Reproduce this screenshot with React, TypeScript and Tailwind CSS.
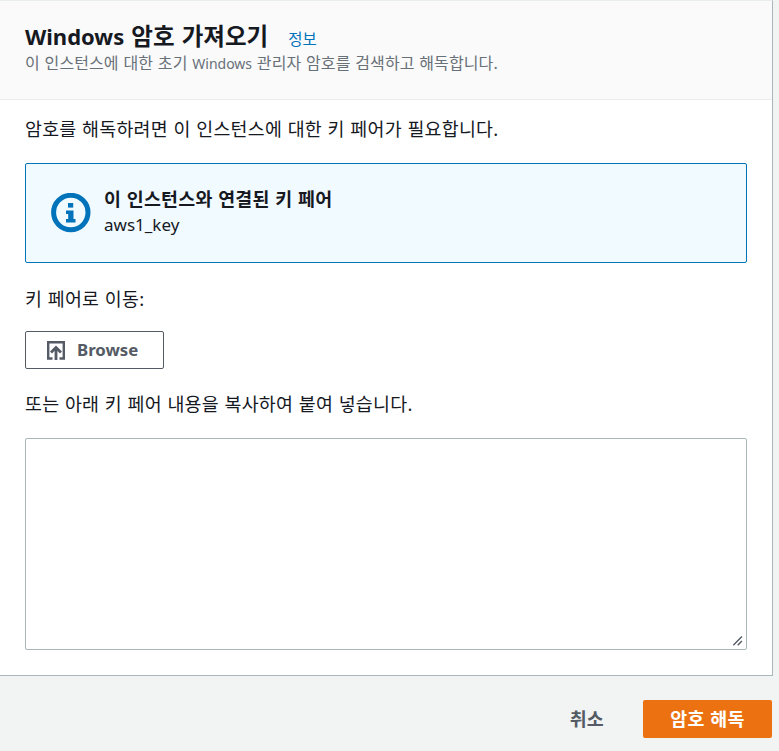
const ko = "text-[18.4px] leading-[24px] tracking-[0.26px] [word-spacing:0.5px]";

export default function App() {
  return (
    <div className="h-[751px] w-[779px] overflow-hidden bg-[#f2f3f3] font-['Noto_Sans','Noto_Sans_CJK_KR',sans-serif] text-[#16191f]">
      <div className="h-[676px] w-[773px] border-r border-b border-t border-[#aab7b8] border-t-[#eaeded] bg-white">
        <div className="h-[99px] border-b border-[#eaeded] bg-[#fafafa] pl-[25px] pt-[19px]">
          <div className="flex items-baseline">
            <h1 className="text-[23.5px] leading-[32px] font-bold [word-spacing:1px]">
              <span className="text-[22px]">Windows</span> 암호 가져오기
            </h1>
            <a className="ml-5 text-[15.5px] leading-5 text-[#0073bb]">정보</a>
          </div>
          <p className="mt-[1px] text-[16px] leading-[20px] tracking-[0.1px] [word-spacing:0.5px] text-[#687078]">
            이 인스턴스에 대한 초기 <span className="text-[14px] tracking-normal">Windows</span> 관리자 암호를 검색하고 해독합니다.
          </p>
        </div>
        <div className="px-[25px] pt-[17px]">
          <p className={ko}>암호를 해독하려면 이 인스턴스에 대한 키 페어가 필요합니다.</p>
          <div className="mt-[22px] flex h-[100px] w-[722px] items-center rounded-[2px] border border-[#0073bb] bg-[#f1faff] pl-[25px]">
            <svg width="40" height="40" viewBox="0 0 40 40" className="shrink-0">
              <circle cx="19.8" cy="19.5" r="17.2" fill="none" stroke="#0073bb" strokeWidth="5" />
              <rect x="17" y="10" width="5.2" height="4.6" fill="#0073bb" />
              <path d="M15 17.5h7.5v8.5H24.5v3.5H15V26h2.2v-5H15z" fill="#0073bb" />
            </svg>
            <div className="ml-[13px] -mt-[2px]">
              <div className={ko + " font-bold"}>이 인스턴스와 연결된 키 페어</div>
              <div className="mt-[2px] text-[17px] leading-[24px]">aws1_key</div>
            </div>
          </div>
          <p className={"mt-[24px] " + ko}>키 페어로 이동:</p>
          <button className="mt-[20px] flex h-[38px] w-[139px] items-center rounded-[2px] border border-[#545b64] bg-white pl-[21px] text-[16.8px] font-bold text-[#545b64]">
            <svg width="18" height="19" viewBox="0 0 18 19" className="mr-[12px] shrink-0" fill="none" stroke="#545b64">
              <path d="M5.5 17.5H1.2V1.2H16.8V17.5H12.5" strokeWidth="2.4" />
              <path d="M9 19V7M4 11.5L9 6.5L14 11.5" strokeWidth="2.8" />
            </svg>
            Browse
          </button>
          <p className={"mt-[23px] " + ko}>또는 아래 키 페어 내용을 복사하여 붙여 넣습니다.</p>
          <div className="relative mt-[22px] h-[212px] w-[722px]">
            <textarea className="block h-full w-full resize-none rounded-[2px] border border-[#aab7b8] bg-white outline-none" />
            <svg width="14" height="14" viewBox="0 0 14 14" className="absolute right-[2px] bottom-[2px]" stroke="#545b64" strokeWidth="1.4" fill="none">
              <path d="M2.3 11.2L10.9 2.6M6.7 11.2L10.9 7" />
            </svg>
          </div>
        </div>
      </div>
      <div className="flex w-[772px] items-center justify-end pt-[24px]">
        <button className={"mr-[39px] font-bold text-[#545b64] " + ko}>취소</button>
        <button className={"h-[38px] w-[129px] rounded-[2px] bg-[#ec7211] font-bold text-white " + ko}>암호 해독</button>
      </div>
    </div>
  );
}
